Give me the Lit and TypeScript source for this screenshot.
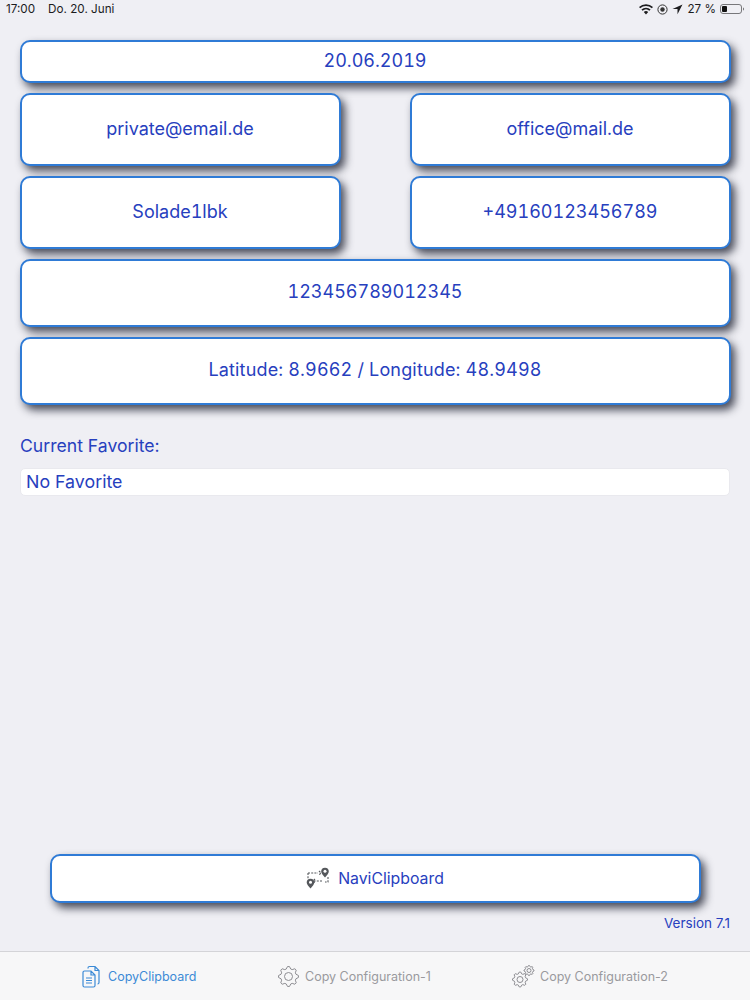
import { LitElement, html, css, svg } from "lit";
import { customElement } from "lit/decorators.js";

const gear = (cx: number, cy: number, r: number) => {
  const teeth = 8;
  const pts: string[] = [];
  for (let i = 0; i < teeth * 4; i++) {
    const a = (i / (teeth * 4)) * Math.PI * 2;
    const rr = i % 4 < 2 ? r : r * 0.78;
    pts.push(`${(cx + rr * Math.cos(a - 0.1)).toFixed(2)},${(cy + rr * Math.sin(a - 0.1)).toFixed(2)}`);
  }
  return svg`<polygon points=${pts.join(" ")} fill="none" stroke="#8e8e93" stroke-width="1" stroke-linejoin="round"/>
    <circle cx=${cx} cy=${cy} r=${r * 0.4} fill="none" stroke="#8e8e93" stroke-width="1"/>`;
};

const pin = (x: number, y: number) => svg`<path d="M${x} ${y + 6}c-2.200-2.600-3.800-4.300-3.800-6a3.800 3.800 0 0 1 7.600 0c0 1.700-1.600 3.400-3.800 6z" fill="#55585c"/><circle cx=${x} cy=${y - 0.2} r="1.500" fill="#fff"/>`;

@customElement("app-root")
export class AppRoot extends LitElement {
  static styles = css`
    :host {
      display: flex;
      flex-direction: column;
      width: 750px;
      height: 1000px;
      background: #efeff4;
      font-family: Inter, "Liberation Sans", sans-serif;
      color: #2740be;
      overflow: hidden;
    }
    .status {
      height: 18px;
      padding: 0 5px 0 6px;
      display: flex;
      align-items: center;
      justify-content: space-between;
      font-size: 11.7px;
      color: #1c1c1e;
    }
    .status .left { display: flex; gap: 13px; }
    .status .right { display: flex; align-items: center; gap: 4px; }
    .content {
      flex: 1;
      display: flex;
      flex-direction: column;
      padding: 21.5px 19.5px 0;
    }
    .stack { display: flex; flex-direction: column; gap: 10px; }
    .row { display: flex; justify-content: space-between; }
    .btn {
      box-sizing: border-box;
      display: flex;
      align-items: center;
      justify-content: center;
      gap: 8px;
      padding-bottom: 2px;
      background: #fff;
      border: 2.5px solid #2f7bd6;
      border-radius: 10px;
      box-shadow: 4px 5px 8px rgba(30, 34, 50, 0.8);
      font-size: 18px;
      font-variant-numeric: tabular-nums;
      color: #2740be;
    }
    .half { width: 321px; height: 73px; }
    .date { height: 43px; }
    .wide { height: 68px; }
    .coords { letter-spacing: 0.16px; }
    .label { margin: 30.5px 0 0 0.5px; font-size: 17.6px; line-height: 22px; }
    .field {
      box-sizing: border-box;
      margin: 11px 0.5px 0;
      height: 28px;
      padding: 0 5px 2px;
      display: flex;
      align-items: center;
      background: #fff;
      border: 1px solid #e9e9ee;
      border-radius: 5px;
      font-size: 17.8px;
    }
    .spacer { flex: 1; }
    .navi { height: 49px; margin: 0 30px; padding-bottom: 0; font-size: 15.8px; }
    .version { margin: 12.5px 0.5px 20px 0; text-align: right; font-size: 13.5px; line-height: 16px; }
    .tabs {
      box-sizing: border-box;
      height: 49px;
      background: #f7f7f8;
      border-top: 1px solid #d4d4d8;
      display: grid;
      grid-template-columns: 277px 235px 238px;
    }
    .tab {
      display: flex;
      align-items: center;
      font-size: 12.5px;
      color: #9a9a9e;
      gap: 5px;
    }
    .tab.one { padding-left: 82px; gap: 7px; color: #3b8ad6; }
    svg { display: block; flex: none; }
  `;

  render() {
    return html`
      <div class="status">
        <div class="left"><span>17:00</span><span>Do. 20. Juni</span></div>
        <div class="right">
          <svg width="14" height="11" viewBox="0 0 14 11">
            <path d="M7 10.400 4.800 8a3.200 3.200 0 0 1 4.400 0zM3.600 6.800 2.400 5.500a6.800 6.800 0 0 1 9.200 0l-1.200 1.300a5 5 0 0 0-6.800 0zM1.200 4.300 0 3a10.200 10.200 0 0 1 14 0l-1.200 1.300a8.500 8.500 0 0 0-11.600 0z" fill="#1c1c1e"/>
          </svg>
          <svg width="11" height="11" viewBox="0 0 11 11">
            <circle cx="5.500" cy="5.500" r="4.600" fill="none" stroke="#333" stroke-width="1"/>
            <circle cx="5.500" cy="5.500" r="2.200" fill="#333"/>
          </svg>
          <svg width="11" height="11" viewBox="0 0 11 11"><path d="M10.500.5 0.500 5h5v5.200z" fill="#1c1c1e"/></svg>
          <span>27 %</span>
          <svg width="25" height="12" viewBox="0 0 25 12">
            <rect x="0.500" y="1.500" width="21" height="9" rx="2.500" fill="none" stroke="#77777a"/>
            <rect x="2" y="3" width="5" height="6" rx="1" fill="#111"/>
            <path d="M23 4.500c.8.2 1 .8 1 1.500s-.2 1.300-1 1.500z" fill="#77777a"/>
          </svg>
        </div>
      </div>
      <div class="content">
        <div class="stack">
          <div class="btn date">20.06.2019</div>
          <div class="row">
            <div class="btn half">private@email.de</div>
            <div class="btn half">office@mail.de</div>
          </div>
          <div class="row">
            <div class="btn half">Solade1lbk</div>
            <div class="btn half">+49160123456789</div>
          </div>
          <div class="btn wide">123456789012345</div>
          <div class="btn wide coords">Latitude: 8.9662 / Longitude: 48.9498</div>
        </div>
        <div class="label">Current Favorite:</div>
        <div class="field">No Favorite</div>
        <div class="spacer"></div>
        <div class="btn navi">
          <svg width="24" height="22" viewBox="0 0 24 22">
            <path d="M2 6h10M13 4l2 2-2 2M16 14H8M9 12l-2 2 2 2M2 6v6M22 10v5h-3" fill="none" stroke="#55585c" stroke-width="1.100" stroke-dasharray="2 1.200"/>
            ${pin(19, 4.5)}
            ${pin(4.5, 15.5)}
          </svg>
          <span>NaviClipboard</span>
        </div>
        <div class="version">Version 7.1</div>
      </div>
      <div class="tabs">
        <div class="tab one">
          <svg width="19" height="23" viewBox="0 0 19 23">
            <path d="M1 7.500A1.500 1.500 0 0 1 2.500 6H9l4 4v10.500a1.500 1.500 0 0 1-1.500 1.500h-9A1.500 1.500 0 0 1 1 20.500zM9 6v4h4M4 13h6M4 15.500h6M4 18h6" fill="none" stroke="#3b8ad6" stroke-width="1.200"/>
            <path d="M6 3.500V3a1.500 1.500 0 0 1 1.500-1.500H13l4 4v12a1.500 1.500 0 0 1-1.500 1.500M13 1.500v4h4" fill="none" stroke="#3b8ad6" stroke-width="1.200"/>
          </svg>
          <span>CopyClipboard</span>
        </div>
        <div class="tab two">
          <svg width="23" height="23" viewBox="0 0 23 23">${gear(11.5, 11.5, 10)}</svg>
          <span>Copy Configuration-1</span>
        </div>
        <div class="tab three">
          <svg width="23" height="23" viewBox="0 0 23 23">${gear(8, 14.5, 7.5)}${gear(17, 5.5, 5)}</svg>
          <span>Copy Configuration-2</span>
        </div>
      </div>
    `;
  }
}
